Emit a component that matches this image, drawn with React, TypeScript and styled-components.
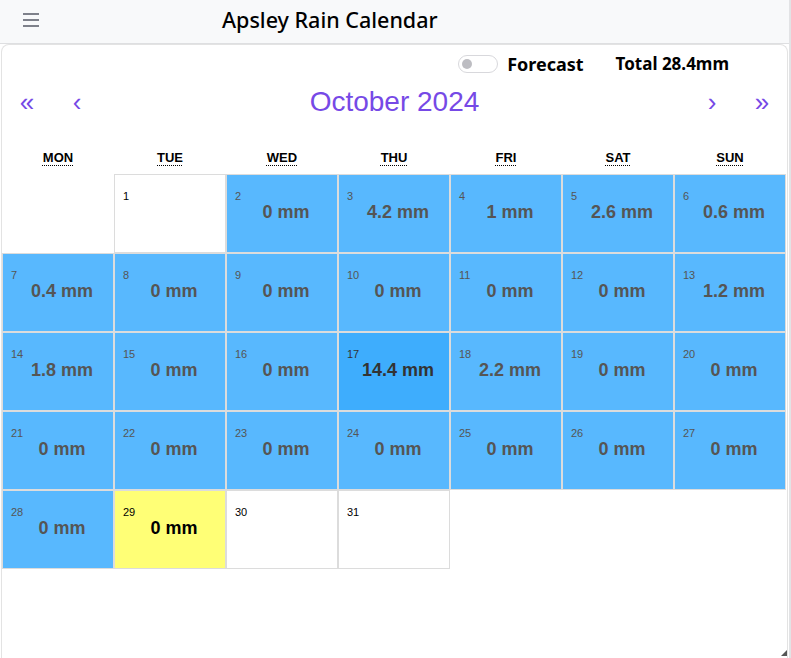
import React from 'react'
import styled, { createGlobalStyle, css } from 'styled-components'

const GlobalStyle = createGlobalStyle`
  html, body {
    margin: 0;
    padding: 0;
    background: #ffffff;
    font-family: "Noto Sans", "Open Sans", sans-serif;
  }
  * { box-sizing: border-box; }
`

type Day = {
  day: number
  rain?: number
  kind: 'past' | 'empty' | 'today' | 'future' | 'max'
}

const rainfall: Record<number, number> = {
  2: 0, 3: 4.2, 4: 1, 5: 2.6, 6: 0.6, 7: 0.4, 8: 0, 9: 0, 10: 0, 11: 0, 12: 0, 13: 1.2,
  14: 1.8, 15: 0, 16: 0, 17: 14.4, 18: 2.2, 19: 0, 20: 0, 21: 0, 22: 0, 23: 0, 24: 0,
  25: 0, 26: 0, 27: 0, 28: 0, 29: 0,
}

const days: Day[] = Array.from({ length: 31 }, (_, i) => {
  const day = i + 1
  if (day === 1) return { day, kind: 'empty' }
  if (day === 29) return { day, rain: 0, kind: 'today' }
  if (day > 29) return { day, kind: 'future' }
  if (day === 17) return { day, rain: rainfall[day], kind: 'max' }
  return { day, rain: rainfall[day], kind: 'past' }
})

const weekdays = [
  ['MON', 'Monday'], ['TUE', 'Tuesday'], ['WED', 'Wednesday'], ['THU', 'Thursday'],
  ['FRI', 'Friday'], ['SAT', 'Saturday'], ['SUN', 'Sunday'],
]

const Page = styled.div`
  width: 791px;
  height: 658px;
  border-right: 2px solid #e2e3e5;
  overflow: hidden;
  display: flex;
  flex-direction: column;
`

const NavBar = styled.header`
  height: 44px;
  flex-shrink: 0;
  background: #f8f9fa;
  border-bottom: 1px solid #dedfe1;
  display: flex;
  align-items: center;
`

const Burger = styled.button`
  width: 62px;
  height: 44px;
  padding: 0 0 4px 0;
  border: none;
  background: transparent;
  display: flex;
  align-items: center;
  justify-content: center;
`

const Title = styled.h1`
  margin: 0 0 4px 160px;
  font-family: "Noto Sans", "Open Sans", sans-serif;
  font-size: 21.5px;
  font-weight: 500;
  color: #000;
`

const Card = styled.main`
  position: relative;
  flex: 1;
  margin: 0 1px 0 1px;
  border: 1px solid #e3e3e3;
  border-bottom: none;
  border-radius: 8px 8px 0 0;
`

const TopRow = styled.div`
  height: 34px;
  padding: 3px 58px 0 0;
  display: flex;
  align-items: center;
  justify-content: flex-end;
`

const Switch = styled.span`
  position: relative;
  width: 40px;
  height: 18px;
  border: 1px solid #d8d8dc;
  border-radius: 9px;
  background: #fff;
  margin-right: 9px;
  &::after {
    content: '';
    position: absolute;
    left: 3px;
    top: 3px;
    width: 10px;
    height: 10px;
    border-radius: 50%;
    background: #bdbdc2;
  }
`

const Label = styled.span<{ $gap?: number; $size?: number }>(
  ({ $gap = 0, $size = 17 }) => css`
    font-family: "Noto Sans", "Open Sans", sans-serif;
    font-weight: 700;
    font-size: ${$size}px;
    color: #000;
    margin-right: ${$gap}px;
  `,
)

const Navigation = styled.div`
  height: 44px;
  margin-top: 1px;
  display: flex;
  align-items: center;
`

const NavButton = styled.button`
  width: 50px;
  height: 44px;
  border: none;
  background: transparent;
  color: #7649e6;
  font-family: "Liberation Sans", Arial, sans-serif;
  font-size: 26px;
  padding: 0;
`

const MonthLabel = styled.span`
  flex: 1;
  text-align: center;
  color: #7649e6;
  font-family: "Liberation Sans", Arial, sans-serif;
  font-size: 28px;
`

const Weekdays = styled.div`
  display: grid;
  grid-template-columns: repeat(7, 112px);
  margin-top: 16px;
  height: 34px;
  align-items: center;
`

const Weekday = styled.abbr`
  text-align: center;
  font-family: "Liberation Sans", Arial, sans-serif;
  font-size: 13px;
  font-weight: 700;
  color: #000;
  text-decoration: underline dotted;
  text-underline-offset: 3px;
  text-decoration-thickness: 1px;
  justify-self: center;
`

const Grid = styled.div`
  display: grid;
  grid-template-columns: repeat(7, 112px);
  grid-auto-rows: 79px;
`

const tileColours = {
  past: { bg: '#58b8fe', num: '#555', val: '#555' },
  max: { bg: '#3eadfd', num: '#333', val: '#333' },
  today: { bg: '#ffff76', num: '#000', val: '#000' },
  empty: { bg: '#ffffff', num: '#000', val: '#000' },
  future: { bg: '#ffffff', num: '#000', val: '#000' },
}

const Tile = styled.div<{ $kind: Day['kind'] }>(
  ({ $kind }) => css`
    background: ${tileColours[$kind].bg};
    border: 1px solid #dcdcdc;
    padding: 15px 0 0 8px;
    font-family: "Liberation Sans", Arial, sans-serif;
    color: ${tileColours[$kind].num};
  `,
)

const DayNumber = styled.div`
  font-size: 11px;
  line-height: 13px;
`

const Rain = styled.div<{ $kind: Day['kind'] }>(
  ({ $kind }) => css`
    margin-top: -2px;
    text-align: center;
    font-size: 18px;
    line-height: 22px;
    font-weight: 700;
    color: ${tileColours[$kind].val};
  `,
)

const Grip = styled.svg`
  position: absolute;
  right: 0;
  bottom: 2px;
`

export default function App() {
  return (
    <>
      <GlobalStyle />
      <Page>
        <NavBar>
          <Burger aria-label="menu">
            <svg width="18" height="16" viewBox="0 0 18 16">
              <path d="M1 2h16M1 8h16M1 14h16" stroke="#555a66" strokeWidth="1.4" />
            </svg>
          </Burger>
          <Title>Apsley Rain Calendar</Title>
        </NavBar>
        <Card>
          <TopRow>
            <Switch />
            <Label $gap={32} $size={18}>Forecast</Label>
            <Label>Total 28.4mm</Label>
          </TopRow>
          <Navigation>
            <NavButton>«</NavButton>
            <NavButton>‹</NavButton>
            <MonthLabel>October 2024</MonthLabel>
            <NavButton>›</NavButton>
            <NavButton>»</NavButton>
          </Navigation>
          <Weekdays>
            {weekdays.map(([short, long]) => (
              <Weekday key={short} title={long}>{short}</Weekday>
            ))}
          </Weekdays>
          <Grid>
            <div />
            {days.map((d) => (
              <Tile key={d.day} $kind={d.kind}>
                <DayNumber>{d.day}</DayNumber>
                {d.rain !== undefined && <Rain $kind={d.kind}>{d.rain} mm</Rain>}
              </Tile>
            ))}
          </Grid>
          <Grip width="6" height="6" viewBox="0 0 6 6">
            <path d="M6 0V6H0Z" fill="#555" />
          </Grip>
        </Card>
      </Page>
    </>
  )
}
